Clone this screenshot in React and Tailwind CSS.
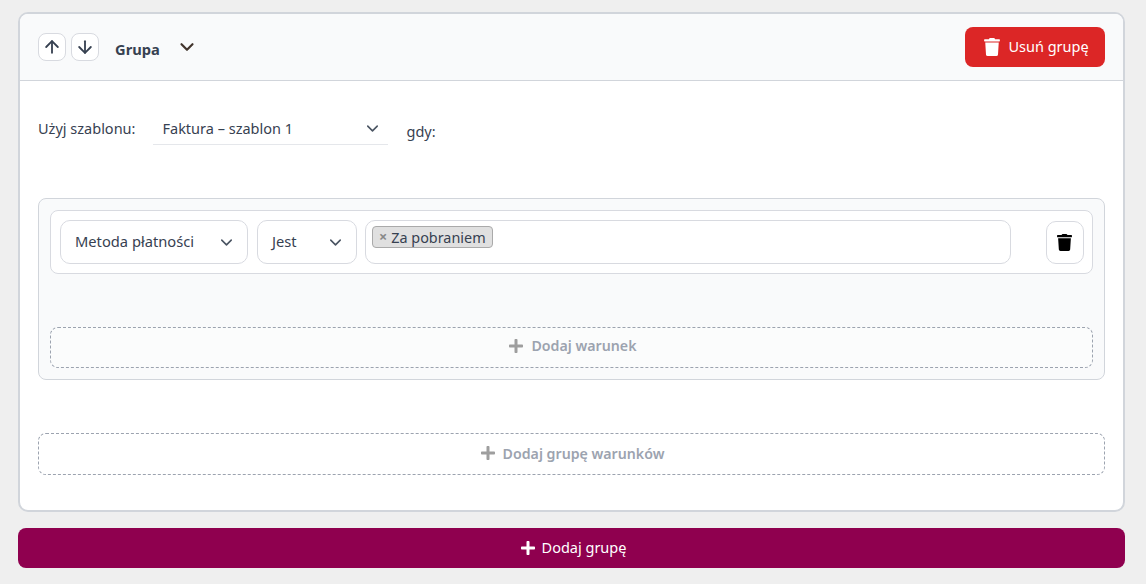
import React from 'react';
import { ArrowUp, ArrowDown, ChevronDown } from 'lucide-react';
import { FaTrash, FaPlus } from 'react-icons/fa';

const Select = ({ label, width }) => (
  <div className={`${width} h-[44px] shrink-0 flex items-center justify-between pl-[14px] pr-[11px] bg-white border border-[#d8dae0] rounded-[10px]`}>
    <span className="pb-[2px] text-[14.7px] text-[#374151]">{label}</span>
    <ChevronDown size={19} strokeWidth={2} className="text-[#4b5563]" />
  </div>
);

const App = () => {
  return (
    <div className="w-[1146px] h-[584px] overflow-hidden bg-[#efefef] pl-[18px] pr-[21px] pt-[12px] font-['Noto_Sans',sans-serif]">
      <div className="h-[500px] bg-white border-2 border-[#d1d5db] rounded-[10px] overflow-hidden">
        {/* Header */}
        <div className="h-[67px] bg-[#f9fafb] border-b border-[#d1d5db] flex items-center justify-between pl-[18px] pr-[18px]">
          <div className="flex items-center">
            <button className="w-[28px] h-[28px] flex items-center justify-center bg-white border border-[#d8dae0] rounded-[8px] text-[#374151]">
              <ArrowUp size={20} strokeWidth={2.2} />
            </button>
            <button className="w-[28px] h-[28px] ml-[5px] flex items-center justify-center bg-white border border-[#d8dae0] rounded-[8px] text-[#374151]">
              <ArrowDown size={20} strokeWidth={2.2} />
            </button>
            <span className="ml-[16px] mt-[4px] text-[14.7px] font-bold text-[#374151]">Grupa</span>
            <ChevronDown size={22} strokeWidth={2.4} className="ml-[16px] text-[#43362e]" />
          </div>
          <button className="w-[140px] h-[40px] pl-[2px] flex items-center justify-center gap-[7px] bg-[#dc2626] rounded-[8px] text-white text-[14.5px]">
            <FaTrash size={18} />
            <span className="pb-[1px]">Usuń grupę</span>
          </button>
        </div>

        {/* Body */}
        <div className="px-[18px]">
          <div className="flex items-center mt-[31px]">
            <span className="text-[14.5px] text-[#374151]">Użyj szablonu:</span>
            <div className="w-[235px] h-[33px] ml-[18px] pl-[9px] pr-[6px] flex items-center justify-between border-b border-[#e5e7eb]">
              <span className="pt-[2px] text-[14.5px] text-[#374151]">Faktura – szablon 1</span>
              <ChevronDown size={19} strokeWidth={2} className="text-[#4b5563]" />
            </div>
            <span className="ml-[18px] mt-[7px] text-[14.5px] text-[#374151]">gdy:</span>
          </div>

          {/* Conditions */}
          <div className="h-[182px] mt-[53px] bg-[#f9fafb] border border-[#d1d5db] rounded-[8px] px-[11px] pt-[11px]">
            <div className="h-[64px] bg-white border border-[#d8dae0] rounded-[8px] flex items-center pl-[9px]">
              <Select label="Metoda płatności" width="w-[188px]" />
              <div className="w-[9px] shrink-0" />
              <Select label="Jest" width="w-[100px]" />
              <div className="w-[646px] h-[44px] ml-[8px] shrink-0 flex items-start bg-white border border-[#d8dae0] rounded-[10px] pl-[6px] pt-[5px]">
                <span className="flex items-center h-[22px] px-[6px] bg-[#e0e0e0] border border-[#aaaaaa] rounded-[4px] text-[14.4px] text-[#374151]">
                  <span className="mr-[4px] text-[#888888] font-bold">×</span>
                  <span className="pt-[1px]">Za pobraniem</span>
                </span>
              </div>
              <button className="w-[38px] h-[43px] ml-[35px] pr-[1px] flex items-center justify-center bg-white border border-[#d8dae0] rounded-[10px] text-black">
                <FaTrash size={17} />
              </button>
            </div>
            <button className="w-full h-[41px] mt-[53px] pl-[2px] flex items-center justify-center gap-[7px] bg-[#fbfcfc] border border-dashed border-[#9ca3af] rounded-[8px] text-[14.2px] font-semibold text-[#9ca3af]">
              <FaPlus size={16} className="mb-[3px] text-[#9e9e9e]" />
              <span className="pb-[3px]">Dodaj warunek</span>
            </button>
          </div>

          <button className="w-full h-[42px] mt-[53px] pl-[1px] flex items-center justify-center gap-[7px] bg-white border border-dashed border-[#9ca3af] rounded-[8px] text-[14.2px] font-semibold text-[#9ca3af]">
            <FaPlus size={16} className="mb-[2px] text-[#9e9e9e]" />
            <span className="pb-[1px]">Dodaj grupę warunków</span>
          </button>
        </div>
      </div>

      <button className="w-full h-[40px] mt-[16px] pl-[3px] flex items-center justify-center gap-[6px] bg-[#8f004f] rounded-[8px] text-white text-[14.5px]">
        <FaPlus size={16} />
        <span className="pb-[1px]">Dodaj grupę</span>
      </button>
    </div>
  );
};

export default App;
